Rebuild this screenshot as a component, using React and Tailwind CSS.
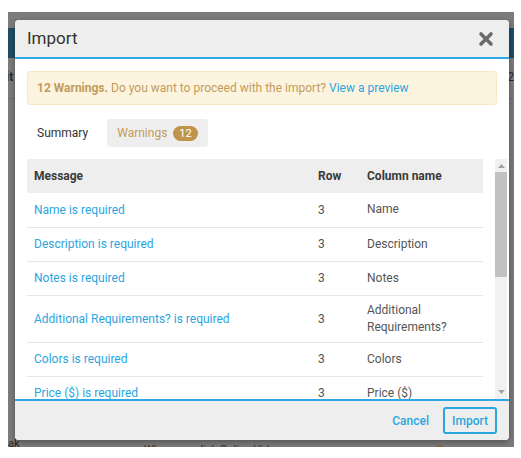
import React from "react";

const rows = [
  { message: "Name is required", row: 3, column: "Name" },
  { message: "Description is required", row: 3, column: "Description" },
  { message: "Notes is required", row: 3, column: "Notes" },
  { message: "Additional Requirements? is required", row: 3, column: "Additional Requirements?" },
  { message: "Colors is required", row: 3, column: "Colors" },
  { message: "Price ($) is required", row: 3, column: "Price ($)" },
  { message: "Sizes is required", row: 3, column: "Sizes" },
  { message: "Category is required", row: 3, column: "Category" },
  { message: "Image is required", row: 3, column: "Image" },
  { message: "SKU is required", row: 3, column: "SKU" },
  { message: "Quantity is required", row: 3, column: "Quantity" },
  { message: "Weight is required", row: 3, column: "Weight" },
];

function CloseIcon() {
  return (
    <svg width="16" height="16" viewBox="0 0 16 16">
      <path d="M3 3 L13 13 M13 3 L3 13" stroke="#6b6b6b" strokeWidth="3.6" strokeLinecap="round" />
    </svg>
  );
}

function Arrow({ down }) {
  return (
    <svg width="7" height="4" viewBox="0 0 7 4">
      <path d={down ? "M0 0 L7 0 L3.5 4 Z" : "M0 4 L7 4 L3.5 0 Z"} fill="#a3a3a3" />
    </svg>
  );
}

export default function App() {
  return (
    <div className="min-h-screen bg-white pl-2 pt-3 font-['Roboto','Liberation_Sans',sans-serif]">
      <div className="relative w-[506px] h-[435px] overflow-hidden bg-[#7c7c7c]">
        {/* dimmed app behind the overlay */}
        <div className="mt-4 h-[30px] bg-[#1f4d66]" />
        <div className="flex justify-between pt-[10px] text-[12px] text-[#2a2a2a]">
          <span className="-ml-[2px] font-bold">it</span>
          <span>2</span>
        </div>
        <div className="mt-[12px] h-px bg-[#6e6e6e]" />
        <div className="absolute left-0 top-[424px] text-[11px] text-[#222]">ak</div>
        <div className="absolute left-[136px] top-[430px] text-[11px] text-[#333]">When you click Online Video, you can</div>
        <div className="absolute left-[428px] top-[430px] text-[11px] text-[#8a5a1a]">Orange</div>

        {/* modal */}
        <div className="absolute left-[7px] top-[8px] w-[494px] rounded-[4px] bg-white overflow-hidden shadow-[0_2px_6px_rgba(0,0,0,0.35)]">
          <div className="flex items-center justify-between h-[39px] bg-[#eeeeee] border-b-2 border-[#2ea8e2] pl-3 pr-[15px]">
            <h2 className="text-[17px] text-[#333] leading-none">Import</h2>
            <CloseIcon />
          </div>

          <div className="pt-[12px] pl-3">
            <div className="mr-3 h-[34px] flex items-center px-[9px] rounded-[3px] bg-[#fdf4df] border border-[#f8e7c2] text-[12px] text-[#c29c5a]">
              <span className="font-bold mr-[3px]">12 Warnings.</span>
              <span>Do you want to proceed with the import?</span>
              <a className="ml-[3px] text-[#2aa6df]">View a preview</a>
            </div>

            <div className="flex items-center mt-[14px] text-[12px]">
              <div className="pl-[10px] pr-[19px] text-[#333]">Summary</div>
              <div className="flex items-center gap-[6px] h-[28px] w-[101px] pl-[10px] rounded-[3px] bg-[#eeeeee] text-[#c29c5a]">
                <span>Warnings</span>
                <span className="h-[15px] px-[6px] rounded-full bg-[#c0954b] text-white text-[11px] leading-[15px]">12</span>
              </div>
            </div>

            <div className="flex mt-[12px] h-[240px]">
              <div className="w-[468px] overflow-hidden">
                <table className="w-[456px] table-fixed border-collapse text-[12px]">
                  <colgroup>
                    <col className="w-[284px]" />
                    <col className="w-[49px]" />
                    <col className="w-[123px]" />
                  </colgroup>
                  <thead>
                    <tr className="h-[34px] bg-[#eeeeee] text-left text-[#3a3a3a]">
                      <th className="px-[7px] font-bold">Message</th>
                      <th className="px-[7px] font-bold">Row</th>
                      <th className="px-[7px] font-bold">Column name</th>
                    </tr>
                  </thead>
                  <tbody>
                    {rows.map((r) => (
                      <tr key={r.message} className="h-[34px] border-b border-[#e6e6e6]">
                        <td className="px-[7px] py-[6px] text-[#2aa6df]">{r.message}</td>
                        <td className="px-[7px] py-[6px] text-[#555]">{r.row}</td>
                        <td className="px-[7px] py-[6px] text-[#555] leading-[17px]">{r.column}</td>
                      </tr>
                    ))}
                  </tbody>
                </table>
              </div>
              {/* scrollbar */}
              <div className="w-[12px] flex flex-col items-center bg-[#f1f1f1]">
                <div className="h-[13px] flex items-center justify-center">
                  <Arrow />
                </div>
                <div className="w-full h-[105px] bg-[#c1c1c1]" />
                <div className="flex-1" />
                <div className="h-[14px] flex items-center justify-center">
                  <Arrow down />
                </div>
              </div>
            </div>
          </div>

          <div className="flex items-center justify-end h-[41px] bg-[#eeeeee] border-t-2 border-[#2ea8e2] pr-3 text-[12px]">
            <a className="mr-[14px] text-[#2aa6df] font-medium">Cancel</a>
            <button className="h-[27px] w-[54px] rounded-[3px] border-2 border-[#2aa6df] text-[#2aa6df] font-medium">Import</button>
          </div>
        </div>
      </div>
    </div>
  );
}
